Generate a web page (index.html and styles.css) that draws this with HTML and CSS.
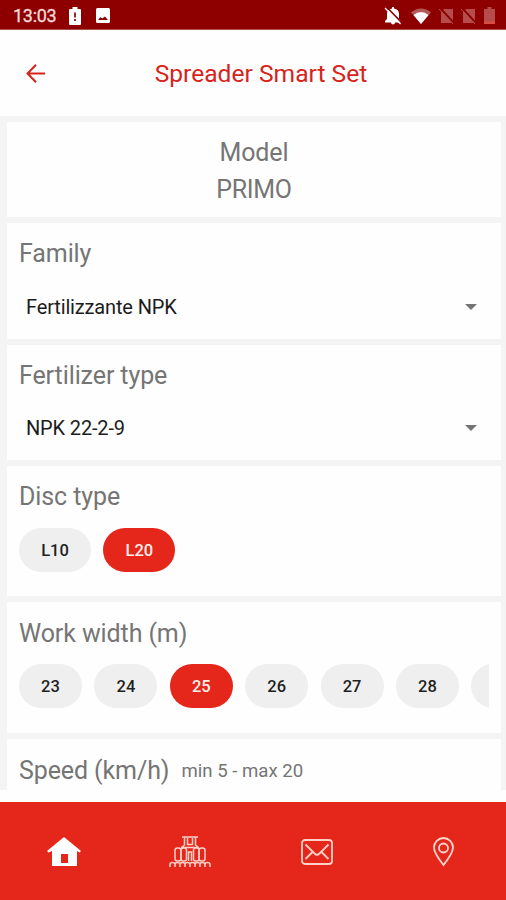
FILE: index.html
```html
<!DOCTYPE html>
<html lang="en">
<head>
<meta charset="utf-8">
<title>Spreader Smart Set</title>
<link rel="stylesheet" href="styles.css">
</head>
<body>
<div class="app">
  <div class="status">
    <span class="clock">13:03</span>
    <svg class="s-batt" width="12" height="18" viewBox="0 0 12 18"><path fill="#fff" d="M3.500 0h5v2H11q1 0 1 1v14q0 1-1 1H1q-1 0-1-1V3q0-1 1-1h2.500z"/><path stroke="#8e0000" stroke-width="1.700" d="M6 5.500v5M6 12v2"/></svg>
    <svg class="s-image" width="14" height="15" viewBox="0 0 14 15"><rect width="14" height="15" rx="1.500" fill="#fff"/><path fill="#8e0000" d="M2 12l2.500-3 1.700 1.500L9 8.500l3 3.500z"/></svg>
    <span class="grow"></span>
    <svg class="s-bell" width="18" height="18" viewBox="0 0 18 18"><path fill="#fff" d="M8 0h2v1.500q5 .8 5 5.500v5l2 2v1.500H1V14l2-2V7q0-4.700 5-5.500zM7 15.500h4q0 2-2 2t-2-2z"/><path stroke="#8e0000" stroke-width="1.600" d="M2.500 0l15 15.500"/><path stroke="#fff" stroke-width="1.200" d="M1 1l15.500 16"/></svg>
    <svg class="s-wifi" width="20" height="16" viewBox="0 0 20 16"><path fill="#fff" opacity=".35" d="M0 4.500Q10-3.500 20 4.500L10 16z"/><path fill="#fff" d="M2.500 7Q10 1 17.500 7L10 16z"/></svg>
    <svg class="s-sim" width="15" height="16" viewBox="0 0 15 16"><path fill="#b54d4d" d="M5 1h9v14H2V4z"/><path stroke="#8e0000" stroke-width="2" d="M1 0l14 15"/><path stroke="#b54d4d" d="M0 1l14 15"/></svg>
    <svg class="s-sim" width="15" height="16" viewBox="0 0 15 16"><path fill="#b54d4d" d="M5 1h9v14H2V4z"/><path stroke="#8e0000" stroke-width="2" d="M1 0l14 15"/><path stroke="#b54d4d" d="M0 1l14 15"/></svg>
    <svg class="s-low" width="11" height="17" viewBox="0 0 11 17"><path fill="#b54d4d" d="M3.500 0h4v2H11v15H0V2h3.500z"/><path fill="#d94e42" d="M0 14.500h11V17H0z"/></svg>
  </div>
  <header class="header">
    <svg class="back" width="20" height="20" viewBox="0 0 20 20" fill="none" stroke="#d5241c" stroke-width="2"><path d="M19 9.500H1.500M10 .8L1.500 9.500l8.500 8.700"/></svg>
    <h1 class="title">Spreader Smart Set</h1>
  </header>
  <main class="content">
    <section class="card model"><span class="label">Model</span><span class="label primo">PRIMO</span></section>
    <section class="card family">
      <h2 class="label">Family</h2>
      <div class="select"><span>Fertilizzante NPK</span><i class="caret"></i></div>
    </section>
    <section class="card fertilizer">
      <h2 class="label">Fertilizer type</h2>
      <div class="select"><span>NPK 22-2-9</span><i class="caret"></i></div>
    </section>
    <section class="card disc">
      <h2 class="label">Disc type</h2>
      <div class="chips wide"><span class="chip">L10</span><span class="chip on">L20</span></div>
    </section>
    <section class="card width">
      <h2 class="label">Work width (m)</h2>
      <div class="chips"><span class="chip">23</span><span class="chip">24</span><span class="chip on">25</span><span class="chip">26</span><span class="chip">27</span><span class="chip">28</span><span class="chip"></span></div>
    </section>
    <section class="card speed">
      <h2 class="label">Speed (km/h)</h2><span class="hint">min 5 - max 20</span>
    </section>
  </main>
  <nav class="nav">
    <a class="tab"><svg width="34" height="30" viewBox="0 0 34 30"><path fill="#fff" d="M17 0l17 14-1.500 1.500L30 14v15H5V14l-3.500 1.500L0 14z"/><path fill="#e5261b" d="M14 17h7v9h-7z"/></svg></a>
    <a class="tab"><svg width="42" height="32" viewBox="0 0 42 32" fill="none" stroke="#ffd0c6" stroke-width="1.500"><path d="M13 1h16M15.500 1v8l-3 2.500M26.500 1v8l3 2.500M18.500 2v6.500h5V2M12 11.500h18"/><rect x="6" y="12" width="6" height="13" rx="2.500"/><rect x="12" y="12" width="5.500" height="13" rx="2"/><rect x="24.500" y="12" width="5.500" height="13" rx="2"/><rect x="30" y="12" width="6" height="13" rx="2.500"/><path d="M19.500 25v-9h3v9"/><path d="M1 31v-2.500q0-2 2.500-2T6 28.500V31M6 28.500q0-2 2.500-2t2.500 2V31M11 28.500q0-2 2.500-2t2.500 2V31M16 28.500q0-2 2.500-2t2.500 2V31M21 28.500q0-2 2.500-2t2.500 2V31M26 28.500q0-2 2.500-2t2.500 2V31M31 28.500q0-2 2.500-2t2.500 2V31M36 28.500q0-2 2.500-2t2.500 2V31"/></svg></a>
    <a class="tab"><svg width="32" height="26" viewBox="0 0 32 26" fill="none" stroke="#ffd0c6" stroke-width="1.800"><rect x="1" y="1" width="30" height="24" rx="3"/><path d="M4.500 5.500l9 9q2.500 2.500 5 0l9-9M4.500 20l7-7M27.500 20l-7-7"/></svg></a>
    <a class="tab"><svg width="22" height="30" viewBox="0 0 22 30" fill="none" stroke="#ffd8cf" stroke-width="1.800"><path d="M11.500 28Q2 16 2 10.500a9.500 9.500 0 0 1 19 0Q21 16 11.500 28z"/><circle cx="11.500" cy="11" r="4.500"/></svg></a>
  </nav>
</div>
</body>
</html>
```

FILE: styles.css
```css
* { box-sizing: border-box; }
body { margin: 0; background: #fefefe; font-family: Roboto, "Liberation Sans", sans-serif; }
.app { width: 506px; height: 900px; display: flex; flex-direction: column; overflow: hidden; }
svg { display: block; flex: none; }

.status { height: 30px; flex: none; display: flex; align-items: center; background: #8e0000; border-bottom: 1px solid #a8504c; padding: 2px 11px 0 13px; }
.clock { width: 56px; font-size: 18px; line-height: 20px; letter-spacing: -.3px; color: #f8dcda; -webkit-text-stroke: .3px #f8dcda; }
.s-image { margin-left: 15px; }
.grow { flex: 1; }
.s-wifi { margin-left: 9px; }
.s-sim { margin-left: 7px; }
.s-wifi + .s-sim { margin-left: 8px; }
.s-low { margin-left: 8px; }

.header { height: 86px; flex: none; display: grid; grid-template-columns: 20px 1fr 20px; align-items: center; padding: 2px 10px 0 26px; }
.title { margin: 0; text-align: center; font-size: 24.600px; line-height: 30px; font-weight: 400; color: #d5241c; }

.content { height: 674px; flex: none; display: flex; flex-direction: column; gap: 6px; padding: 6px 5px 0 7px; background: #f4f4f4; overflow: hidden; }
.card { flex: none; background: #fefefe; padding: 16px 12px 0; }
.label { margin: 0; font-size: 25px; line-height: 30px; font-weight: 400; letter-spacing: -.1px; color: #757575; white-space: nowrap; }
.primo { letter-spacing: -.3px; }
.model { height: 95px; display: flex; flex-direction: column; align-items: center; gap: 7px; }
.family { height: 116px; }
.fertilizer { height: 115px; }
.disc { height: 130px; }
.width { height: 131px; padding-top: 17px; }
.speed { height: 51px; display: flex; align-items: flex-start; gap: 12px; padding-top: 17px; }
.hint { font-size: 18.600px; line-height: 30px; color: #757575; }
.select { display: flex; align-items: center; justify-content: space-between; margin-top: 25px; padding: 0 12px 0 7px; font-size: 20px; line-height: 26px; letter-spacing: -.15px; color: #1c1c1c; }
.fertilizer .select { margin-top: 24px; }
.caret { border: 6px solid transparent; border-top: 6px solid #757575; border-bottom: 0; }
.chips { display: flex; gap: 12.400px; margin-top: 15px; overflow: hidden; }
.chip { flex: none; width: 63px; height: 44px; border-radius: 22px; display: flex; align-items: center; justify-content: center; font-size: 16.500px; font-weight: 500; color: #1f1f1f; background: #efefef; }
.wide { margin-top: 16px; }
.wide .chip { width: 72px; }
.chip.on { background: #e5261b; color: #fff0ec; }

.nav { height: 98px; flex: none; margin-top: 12px; padding: 1px 0 0 1px; display: grid; grid-template-columns: repeat(4, 1fr); place-items: center; background: #e5261b; }
```
